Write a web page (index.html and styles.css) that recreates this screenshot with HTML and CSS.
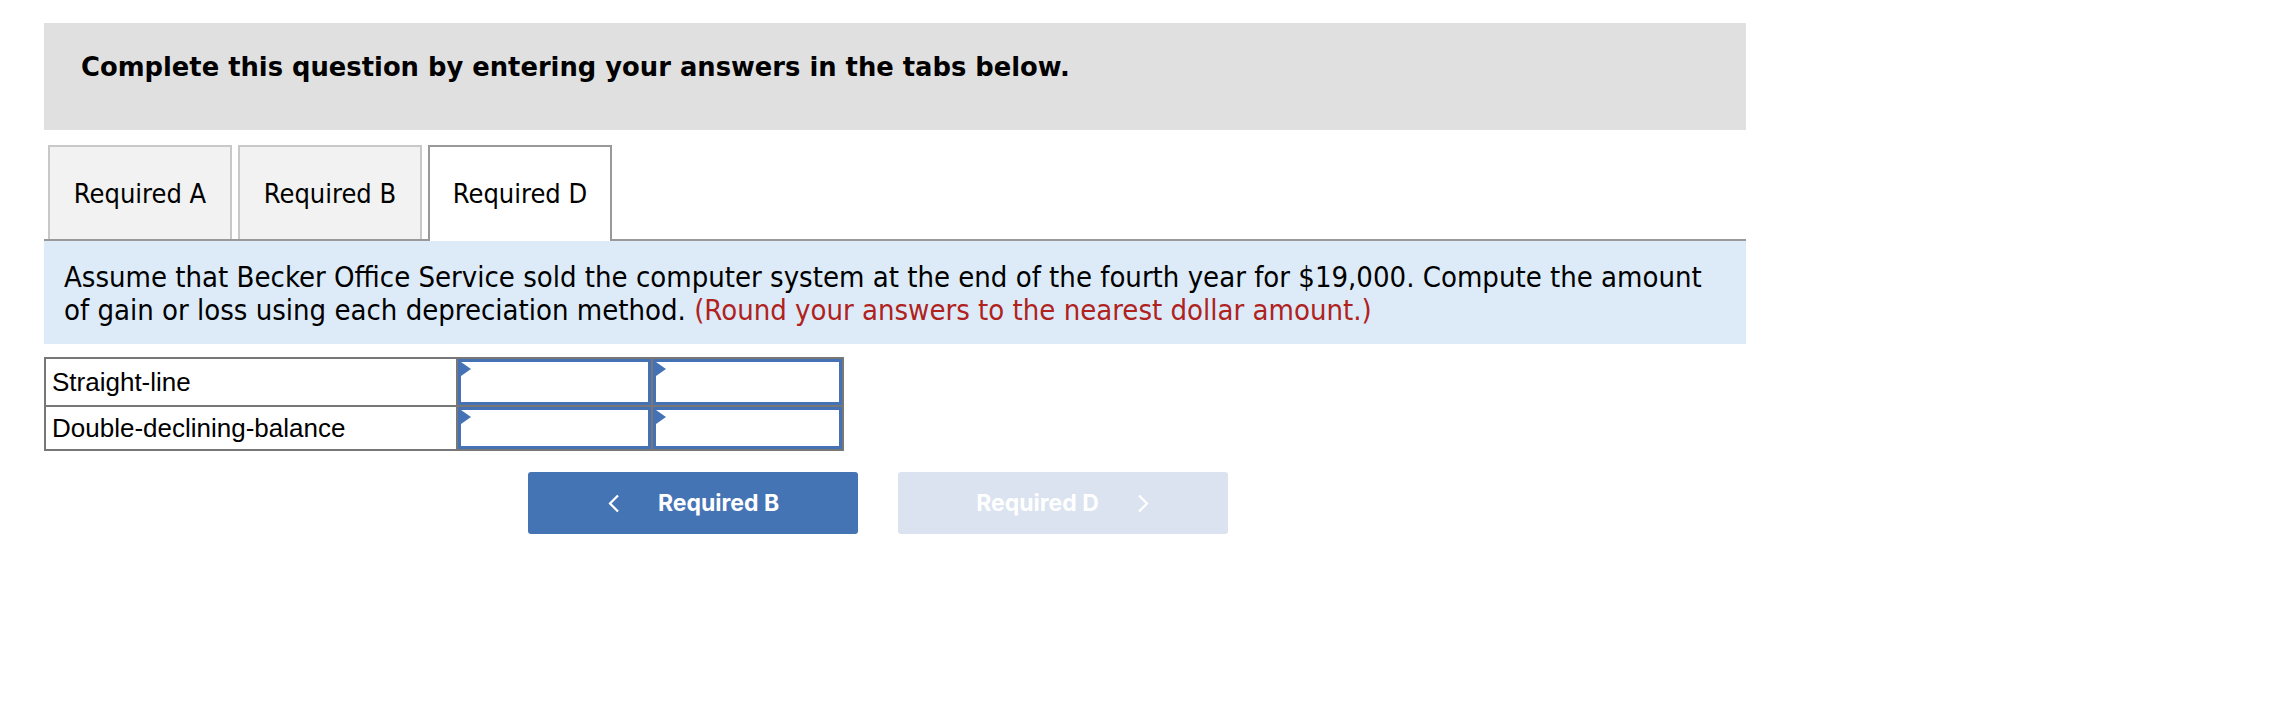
FILE: index.html
```html
<!DOCTYPE html>
<html lang="en">
<head>
<meta charset="utf-8">
<title>Required D</title>
<link rel="stylesheet" href="styles.css">
</head>
<body>
<div class="page">
  <div class="banner">Complete this question by entering your answers in the tabs below.</div>

  <div class="tabs">
    <div class="tab">Required A</div>
    <div class="tab">Required B</div>
    <div class="tab active">Required D</div>
  </div>

  <div class="question">
    Assume that Becker Office Service sold the computer system at the end of the fourth year for $19,000. Compute the amount of gain or loss using each depreciation method. <span class="hint">(Round your answers to the nearest dollar amount.)</span>
  </div>

  <div class="grid">
    <div class="label">Straight-line</div>
    <div class="input"><span class="flag"></span></div>
    <div class="input"><span class="flag"></span></div>
    <div class="label">Double-declining-balance</div>
    <div class="input"><span class="flag"></span></div>
    <div class="input"><span class="flag"></span></div>
  </div>

  <div class="nav">
    <div class="btn prev">
      <svg class="chev" width="13" height="19" viewBox="0 0 13 19"><path d="M11 1.5 L3 9.5 L11 17.5" fill="none" stroke="#fff" stroke-width="2.2"/></svg>
      <span>Required B</span>
    </div>
    <div class="btn next">
      <span>Required D</span>
      <svg class="chev" width="13" height="19" viewBox="0 0 13 19"><path d="M2 1.5 L10 9.5 L2 17.5" fill="none" stroke="#fff" stroke-width="2.2"/></svg>
    </div>
  </div>
</div>
</body>
</html>
```

FILE: styles.css
```css
html, body {
  margin: 0;
  padding: 0;
  background: #fff;
}

.page {
  padding: 23px 0 0 44px;
  width: 1702px;
  font-family: "DejaVu Sans Condensed", "DejaVu Sans", sans-serif;
  color: #000;
}

.banner {
  box-sizing: border-box;
  height: 107px;
  background: #e0e0e0;
  padding: 29px 37px 0;
  font-family: "DejaVu Sans", sans-serif;
  font-weight: bold;
  font-size: 25.8px;
  line-height: 30px;
}

.tabs {
  display: flex;
  gap: 6px;
  margin-top: 15px;
  padding-left: 4px;
  border-bottom: 2px solid #999;
  height: 94px;
}

.tab {
  box-sizing: border-box;
  width: 184px;
  height: 94px;
  background: #f2f2f2;
  border: 2px solid #c8c8c8;
  border-bottom: none;
  display: flex;
  align-items: center;
  justify-content: center;
  font-size: 27px;
  line-height: 33px;
}

.tab.active {
  background: #fff;
  border-color: #999;
  height: 96px;
  position: relative;
  z-index: 1;
  padding-bottom: 2px;
}

.question {
  background: #ddebf8;
  padding: 20px 20px 17px;
  font-size: 29px;
  line-height: 33px;
}

.hint {
  color: #b0221d;
}

.grid {
  display: grid;
  grid-template-columns: 410px 193px 189px;
  grid-template-rows: 46px 42px;
  gap: 2px;
  background: #777;
  border: 2px solid #777;
  width: fit-content;
  margin-top: 13px;
}

.label {
  background: #fff;
  display: flex;
  align-items: center;
  padding-left: 6px;
  font-family: "Liberation Sans", Arial, sans-serif;
  font-size: 26px;
}

.input {
  background: #fff;
  border: 3px solid #4472b4;
  position: relative;
}

.flag {
  position: absolute;
  left: 0;
  top: 0;
  width: 10px;
  height: 14px;
  background: #4472b4;
  clip-path: polygon(0 0, 100% 50%, 0 100%);
}

.nav {
  display: flex;
  gap: 40px;
  margin-top: 21px;
  margin-left: 484px;
}

.btn {
  box-sizing: border-box;
  width: 330px;
  height: 62px;
  border-radius: 3px;
  display: flex;
  align-items: center;
  justify-content: center;
  gap: 38px;
  color: #fff;
  font-family: Inter, "Liberation Sans", sans-serif;
  font-weight: 700;
  font-size: 23px;
}

.btn.prev {
  background: #4574b5;
}

.btn.next {
  background: #dae3ef;
}

.chev {
  display: block;
}
```
